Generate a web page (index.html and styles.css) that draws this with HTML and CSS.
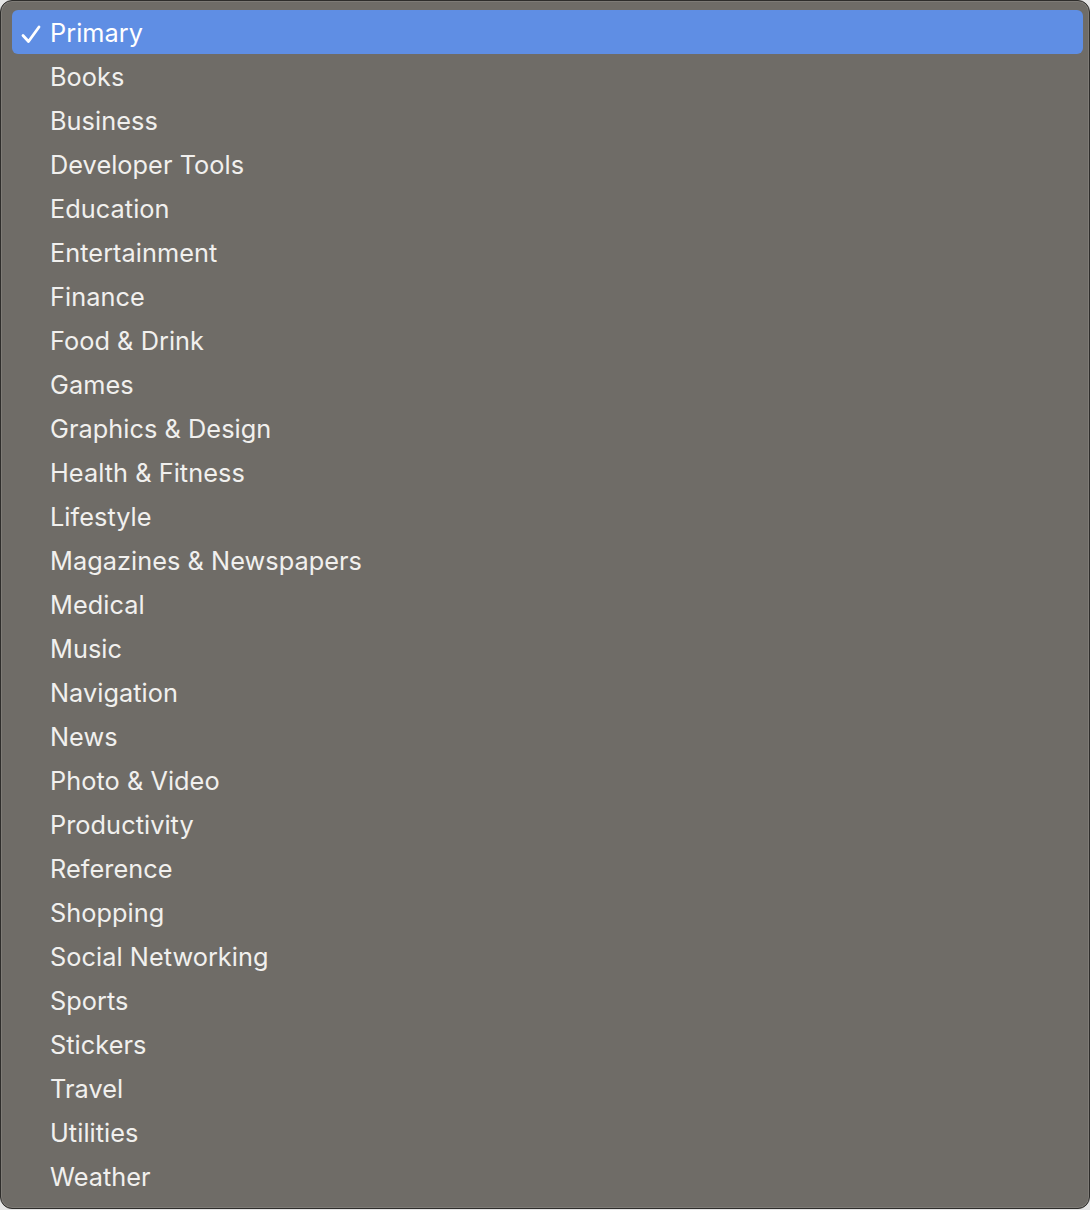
FILE: index.html
```html
<!DOCTYPE html>
<html>
<head>
<meta charset="utf-8">
<link rel="stylesheet" href="styles.css">
</head>
<body>
<div class="menu">
  <div class="item selected"><svg class="check" width="20" height="19" viewBox="0 0 20 19"><path d="M2 10.5 L7.5 16.5 L18 2" fill="none" stroke="#ffffff" stroke-width="2.8" stroke-linecap="round" stroke-linejoin="round"/></svg><span class="label">Primary</span></div>
  <div class="item"><span class="label">Books</span></div>
  <div class="item"><span class="label">Business</span></div>
  <div class="item"><span class="label">Developer Tools</span></div>
  <div class="item"><span class="label">Education</span></div>
  <div class="item"><span class="label">Entertainment</span></div>
  <div class="item"><span class="label">Finance</span></div>
  <div class="item"><span class="label">Food &amp; Drink</span></div>
  <div class="item"><span class="label">Games</span></div>
  <div class="item"><span class="label">Graphics &amp; Design</span></div>
  <div class="item"><span class="label">Health &amp; Fitness</span></div>
  <div class="item"><span class="label">Lifestyle</span></div>
  <div class="item"><span class="label">Magazines &amp; Newspapers</span></div>
  <div class="item"><span class="label">Medical</span></div>
  <div class="item"><span class="label">Music</span></div>
  <div class="item"><span class="label">Navigation</span></div>
  <div class="item"><span class="label">News</span></div>
  <div class="item"><span class="label">Photo &amp; Video</span></div>
  <div class="item"><span class="label">Productivity</span></div>
  <div class="item"><span class="label">Reference</span></div>
  <div class="item"><span class="label">Shopping</span></div>
  <div class="item"><span class="label">Social Networking</span></div>
  <div class="item"><span class="label">Sports</span></div>
  <div class="item"><span class="label">Stickers</span></div>
  <div class="item"><span class="label">Travel</span></div>
  <div class="item"><span class="label">Utilities</span></div>
  <div class="item"><span class="label">Weather</span></div>
</div>
</body>
</html>
```
FILE: styles.css
```css
html, body {
  margin: 0;
  padding: 0;
  background: #e6e6e6;
  width: 1090px;
  height: 1210px;
  overflow: hidden;
}
.menu {
  box-sizing: border-box;
  width: 1090px;
  height: 1209px;
  background: #6f6c67;
  border: 1px solid #2e2d2b;
  border-radius: 12px;
  padding: 9px 6px 10px 11px;
  display: flex;
  flex-direction: column;
  font-family: Inter, "Noto Sans", sans-serif;
  font-size: 25.3px;
  letter-spacing: 0.05px;
  color: #f1f0ee;
  box-shadow: inset 0 0 0 1px #7e7b76;
}
.item {
  height: 44px;
  flex: none;
  display: flex;
  align-items: center;
  position: relative;
  padding-left: 38px;
  border-radius: 6px;
}
.item.selected {
  background: #5f8ee4;
  color: #ffffff;
}
.check {
  position: absolute;
  left: 9px;
  top: 15px;
}
.label {
  line-height: 1;
  position: relative;
  top: 1px;
}
```
